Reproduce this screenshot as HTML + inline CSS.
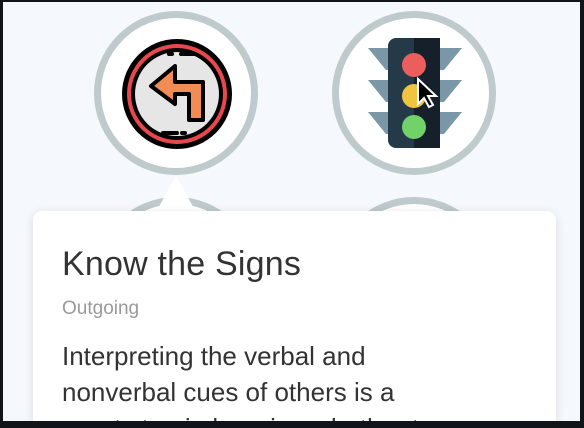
<!DOCTYPE html>
<html><head><style>
html,body{margin:0;padding:0;}
body{width:584px;height:428px;background:#111519;position:relative;overflow:hidden;font-family:"Liberation Sans",sans-serif;}
#page{position:absolute;left:3px;top:2px;width:577px;height:419px;background:#f5f8fc;overflow:hidden;}
.c{position:absolute;width:150px;height:150px;border-radius:50%;background:#fff;border:7px solid #bfcacd;}
.card{position:absolute;left:30px;top:209px;width:523px;height:210px;background:#fff;border-radius:9px 9px 0 0;box-shadow:0 2px 10px rgba(0,0,0,0.12);overflow:hidden;}
.tri{position:absolute;left:153px;top:174px;width:0;height:0;border-left:20px solid transparent;border-right:20px solid transparent;border-bottom:36px solid #fff;}
h1{position:absolute;left:29px;top:34px;margin:0;font-weight:normal;font-size:34px;color:#333;letter-spacing:0.2px;white-space:nowrap;}
.sub{position:absolute;left:29px;top:87px;font-size:19px;color:#9a9a9a;white-space:nowrap;}
.body{position:absolute;left:29px;top:127px;font-size:26px;line-height:36px;color:#333;white-space:nowrap;}
</style></head><body>
<div id="page">
<div class="c" style="left:91px;top:9px"></div>
<div class="c" style="left:329px;top:9px"></div>
<div class="c" style="left:91px;top:195px"></div>
<div class="c" style="left:329px;top:195px"></div>
<svg style="position:absolute;left:116px;top:34px" width="116" height="116" viewBox="0 0 116 116">
<circle cx="58" cy="58" r="55" fill="#000"/>
<circle cx="58" cy="58" r="50" fill="#e8484d"/>
<circle cx="58" cy="58" r="46" fill="#000"/>
<circle cx="58" cy="58" r="42" fill="#e6e6e6"/>
<path d="M56 30 L32 50 L56 68 L56 58 L70 58 L70 84 L84 84 L84 46 L56 46 Z" fill="#f28c55" stroke="#000" stroke-width="4" stroke-linejoin="round"/>
<path d="M62 18 h14 M50 18h3 M44 97 h14 M63 97h3" stroke="#000" stroke-width="4" stroke-linecap="round"/>
</svg>
<svg style="position:absolute;left:365px;top:34px" width="94" height="116" viewBox="0 0 94 116">
<path d="M0 0 H94 L76 22 H18 Z" transform="translate(0,12)" fill="#7a97a8"/>
<path d="M0 0 H94 L76 22 H18 Z" transform="translate(0,44)" fill="#7a97a8"/>
<path d="M0 0 H94 L76 22 H18 Z" transform="translate(0,76)" fill="#7a97a8"/>
<rect x="20" y="2" width="52" height="110" rx="8" fill="#243a48"/>
<rect x="46" y="2" width="26" height="110" rx="0" fill="#15202a"/>
<circle cx="46" cy="29" r="12" fill="#ec5d5d"/>
<circle cx="46" cy="60" r="12" fill="#f0c440"/>
<circle cx="46" cy="91" r="12" fill="#72d26a"/>
<path d="M50 43 L50 68 L56 62 L61 71 L65 69 L60 60 L68 60 Z" fill="#000" stroke="#fff" stroke-width="2"/>
</svg>
<div class="tri"></div>
<div class="card">
<h1>Know the Signs</h1>
<div class="sub">Outgoing</div>
<div class="body">Interpreting the verbal and<br>nonverbal cues of others is a<br>great step in learning whether to</div>
</div>
</div>
</body></html>
